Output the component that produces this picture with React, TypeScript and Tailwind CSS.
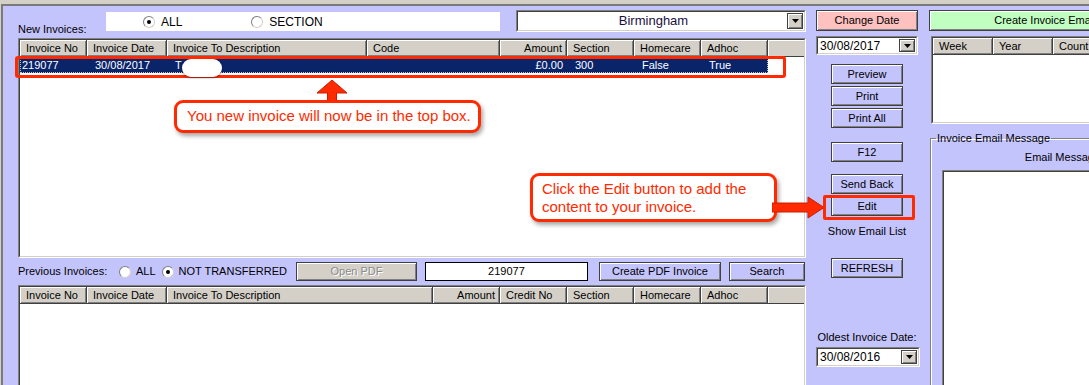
const sans = "font-['Liberation_Sans',Arial,sans-serif]";

type Col = { label: string; w: string; right?: boolean };

const newCols: Col[] = [
  { label: "Invoice No", w: "w-[67px]" },
  { label: "Invoice Date", w: "w-[80px]" },
  { label: "Invoice To Description", w: "w-[200px]" },
  { label: "Code", w: "w-[133px]" },
  { label: "Amount", w: "w-[67px]", right: true },
  { label: "Section", w: "w-[67px]" },
  { label: "Homecare", w: "w-[67px]" },
  { label: "Adhoc", w: "w-[67px]" },
];

const prevCols: Col[] = [
  { label: "Invoice No", w: "w-[67px]" },
  { label: "Invoice Date", w: "w-[80px]" },
  { label: "Invoice To Description", w: "w-[266px]" },
  { label: "Amount", w: "w-[67px]", right: true },
  { label: "Credit No", w: "w-[67px]" },
  { label: "Section", w: "w-[67px]" },
  { label: "Homecare", w: "w-[67px]" },
  { label: "Adhoc", w: "w-[67px]" },
];

const weekCols: Col[] = [
  { label: "Week", w: "w-[60px]" },
  { label: "Year", w: "w-[60px]" },
  { label: "Count", w: "w-[60px]" },
];

const newRow = ["219077", "30/08/2017", "T", "", "£0.00", "300", "False", "True"];

function Btn({ children, className = "", disabled = false }: { children: React.ReactNode; className?: string; disabled?: boolean }) {
  return (
    <div
      className={`flex items-center justify-center border border-[#404040] shadow-[inset_1px_1px_0_#fff,inset_-1px_-1px_0_#808080] leading-none ${
        disabled ? "text-[#8a8a8a] [text-shadow:1px_1px_0_#fff]" : "text-black"
      } ${className}`}
    >
      {children}
    </div>
  );
}

function Sunken({ children, className = "" }: { children?: React.ReactNode; className?: string }) {
  return (
    <div className={`border border-t-[#808080] border-l-[#808080] border-r-white border-b-white ${className}`}>
      <div className="h-full w-full border border-t-[#404040] border-l-[#404040] border-r-[#d4d0c8] border-b-[#d4d0c8] bg-white overflow-hidden">
        {children}
      </div>
    </div>
  );
}

function Combo({ value, className = "", textClass = "" }: { value: string; className?: string; textClass?: string }) {
  return (
    <Sunken className={className}>
      <div className="flex h-full items-center">
        <div className={`flex-1 pl-[2px] ${textClass}`}>{value}</div>
        <div className="flex h-[calc(100%-2px)] w-[16px] mr-[1px] items-center justify-center bg-[#d4d0c8] border border-[#404040] shadow-[inset_1px_1px_0_#fff,inset_-1px_-1px_0_#808080]">
          <svg width="7" height="4" viewBox="0 0 7 4">
            <path d="M0 0h7L3.5 4z" fill="#000" />
          </svg>
        </div>
      </div>
    </Sunken>
  );
}

function Radio({ checked }: { checked?: boolean }) {
  return (
    <div className="flex h-[12px] w-[12px] items-center justify-center rounded-full border border-t-[#808080] border-l-[#808080] border-r-[#d4d0c8] border-b-[#d4d0c8] bg-white">
      {checked && <div className="h-[4px] w-[4px] rounded-full bg-black" />}
    </div>
  );
}

function Header({ cols }: { cols: Col[] }) {
  return (
    <div className="flex h-[17px] shrink-0">
      {cols.map((c) => (
        <div
          key={c.label}
          className={`${c.w} shrink-0 bg-[#d4d0c8] border-r border-b border-[#404040] shadow-[inset_1px_1px_0_#fff,inset_-1px_-1px_0_#808080] leading-[16px] whitespace-nowrap overflow-hidden ${
            c.right ? "text-right pr-[4px]" : "pl-[6px]"
          }`}
        >
          {c.label}
        </div>
      ))}
      <div className="flex-1 bg-[#d4d0c8] border-b border-[#404040] shadow-[inset_1px_1px_0_#fff]" />
    </div>
  );
}

export default function App() {
  return (
    <div className={`relative h-[385px] w-[1089px] overflow-hidden bg-[#d4d0c8] pt-[4px] pl-[1px] text-[11px] text-black ${sans}`}>
      <div className="flex h-full border-t-2 border-l-2 border-t-[#7a7a7a] border-l-[#7a7a7a] bg-[#c4c4fc]">
        {/* left: invoice lists */}
        <div className="flex w-[803px] shrink-0 flex-col overflow-hidden pl-[15px]">
          <div className="flex h-[32px] shrink-0 items-start">
            <div className="w-[88px] self-end pb-[2px] leading-[13px]">New Invoices:</div>
            <div className="mt-[6px] flex h-[19px] w-[394px] items-center bg-white pl-[37px]">
              <Radio checked />
              <span className="ml-[6px] text-[12px]">ALL</span>
              <div className="ml-[69px]">
                <Radio />
              </div>
              <span className="ml-[6px] text-[12px]">SECTION</span>
            </div>
            <Combo
              value="Birmingham"
              className="ml-[16px] mt-[4px] h-[22px] w-[290px]"
              textClass="text-center text-[13px] text-[#1a1040]"
            />
          </div>

          <Sunken className="h-[220px] w-[788px] shrink-0">
            <Header cols={newCols} />
            <div className="mt-[1px] flex h-[15px] w-[748px] items-center bg-[#0a246a] text-white outline-1 outline-dotted outline-offset-[-1px] outline-[#c0c0c0]">
              {newCols.map((c, i) => (
                <div
                  key={c.label}
                  className={`${c.w} shrink-0 leading-[15px] whitespace-nowrap ${c.right ? "text-right pr-[4px]" : i === 0 ? "pl-[2px]" : "pl-[8px]"}`}
                >
                  {newRow[i]}
                </div>
              ))}
            </div>
          </Sunken>

          <div className="flex h-[27px] shrink-0 items-center">
            <span className="w-[101px] leading-[13px]">Previous Invoices:</span>
            <Radio />
            <span className="ml-[5px]">ALL</span>
            <div className="ml-[6px]">
              <Radio checked />
            </div>
            <span className="ml-[5px]">NOT TRANSFERRED</span>
            <Btn disabled className="ml-[9px] h-[19px] w-[121px] bg-[#d4d0c8]">
              Open PDF
            </Btn>
            <div className="ml-[8px] flex h-[19px] w-[163px] items-center justify-center border border-black bg-white">219077</div>
            <Btn className="ml-[11px] h-[19px] w-[122px]">Create PDF Invoice</Btn>
            <Btn className="ml-[8px] h-[19px] w-[76px]">Search</Btn>
          </div>

          <Sunken className="h-[110px] w-[788px] shrink-0">
            <Header cols={prevCols} />
          </Sunken>
        </div>

        {/* middle: actions */}
        <div className="flex w-[122px] shrink-0 flex-col items-center px-[10px]">
          <Btn className="mt-[4px] h-[21px] w-[102px] bg-[#ffc0c0]">Change Date</Btn>
          <Combo value="30/08/2017" className="mt-[5px] h-[19px] w-[102px]" textClass="text-[12px]" />
          <Btn className="mt-[9px] h-[20px] w-[72px]">Preview</Btn>
          <Btn className="mt-[2px] h-[20px] w-[72px]">Print</Btn>
          <Btn className="mt-[2px] h-[20px] w-[72px]">Print All</Btn>
          <Btn className="mt-[14px] h-[20px] w-[72px]">F12</Btn>
          <Btn className="mt-[12px] h-[20px] w-[72px]">Send Back</Btn>
          <Btn className="mt-[2px] h-[20px] w-[72px]">Edit</Btn>
          <div className="mt-[9px] whitespace-nowrap leading-[13px]">Show Email List</div>
          <Btn className="mt-[20px] h-[20px] w-[72px]">REFRESH</Btn>
          <div className="mt-[53px] whitespace-nowrap leading-[13px]">Oldest Invoice Date:</div>
          <Combo value="30/08/2016" className="mt-[3px] h-[20px] w-[104px] ml-[2px]" textClass="text-[12px]" />
        </div>

        {/* right: email */}
        <div className="flex min-w-0 flex-1 flex-col overflow-hidden">
          <Btn className="ml-[1px] mt-[4px] h-[21px] w-[232px] shrink-0 bg-[#c0ffc0]">Create Invoice Email</Btn>
          <Sunken className="ml-[3px] mt-[5px] h-[88px] w-[200px] shrink-0">
            <Header cols={weekCols} />
          </Sunken>
          <fieldset className="ml-[2px] mt-[8px] h-[260px] w-[175px] shrink-0 border border-[#808080] shadow-[inset_1px_1px_0_#fff,1px_1px_0_#fff]">
            <legend className="ml-[5px] px-[1px] leading-[13px]">Invoice Email Message</legend>
            <div className="mt-[6px] pr-[12px] text-right leading-[13px]">Email Message</div>
            <Sunken className="ml-[11px] mt-[6px] h-[240px] w-[170px]" />
          </fieldset>
        </div>
      </div>

      {/* annotations */}
      <div className="absolute left-[15px] top-[56px] h-[22px] w-[771px] rounded-[3px] border-[3px] border-[#ff2a00]" />
      <div className="absolute left-[182px] top-[59px] h-[18px] w-[40px] rounded-full bg-white shadow-[0_1px_2px_rgba(0,0,0,0.45)]" />

      <svg className="absolute left-[316px] top-[79px]" width="32" height="24" viewBox="0 0 32 24">
        <path d="M16 1 L31 14 L20.5 14 L20.5 24 L11.5 24 L11.5 14 L1 14 Z" fill="#ff2a00" stroke="#c81e00" strokeWidth="1" />
      </svg>
      <div className="absolute left-[174px] top-[100px] flex h-[33px] w-[307px] items-center rounded-[9px] border-[3px] border-[#ff2a00] bg-white pl-[10px] text-[15px] text-[#ff2a00] shadow-[2px_3px_4px_rgba(0,0,0,0.35)]">
        You new invoice will now be in the top box.
      </div>

      <div className="absolute left-[530px] top-[173px] flex h-[49px] w-[247px] flex-col justify-center rounded-[9px] border-[3px] border-[#ff2a00] bg-white pl-[9px] text-[15px] leading-[18px] text-[#ff2a00] shadow-[2px_3px_4px_rgba(0,0,0,0.35)]">
        <span>Click the Edit button to add the</span>
        <span>content to your invoice.</span>
      </div>
      <svg className="absolute left-[772px] top-[196px]" width="54" height="23" viewBox="0 0 54 23">
        <path d="M0 7 L36 7 L36 1 L52 11.5 L36 22 L36 16 L0 16 Z" fill="#ff2a00" stroke="#c81e00" strokeWidth="1" />
      </svg>
      <div className="absolute left-[823px] top-[195px] h-[25px] w-[92px] rounded-[2px] border-[3px] border-[#ff2a00]" />
    </div>
  );
}
